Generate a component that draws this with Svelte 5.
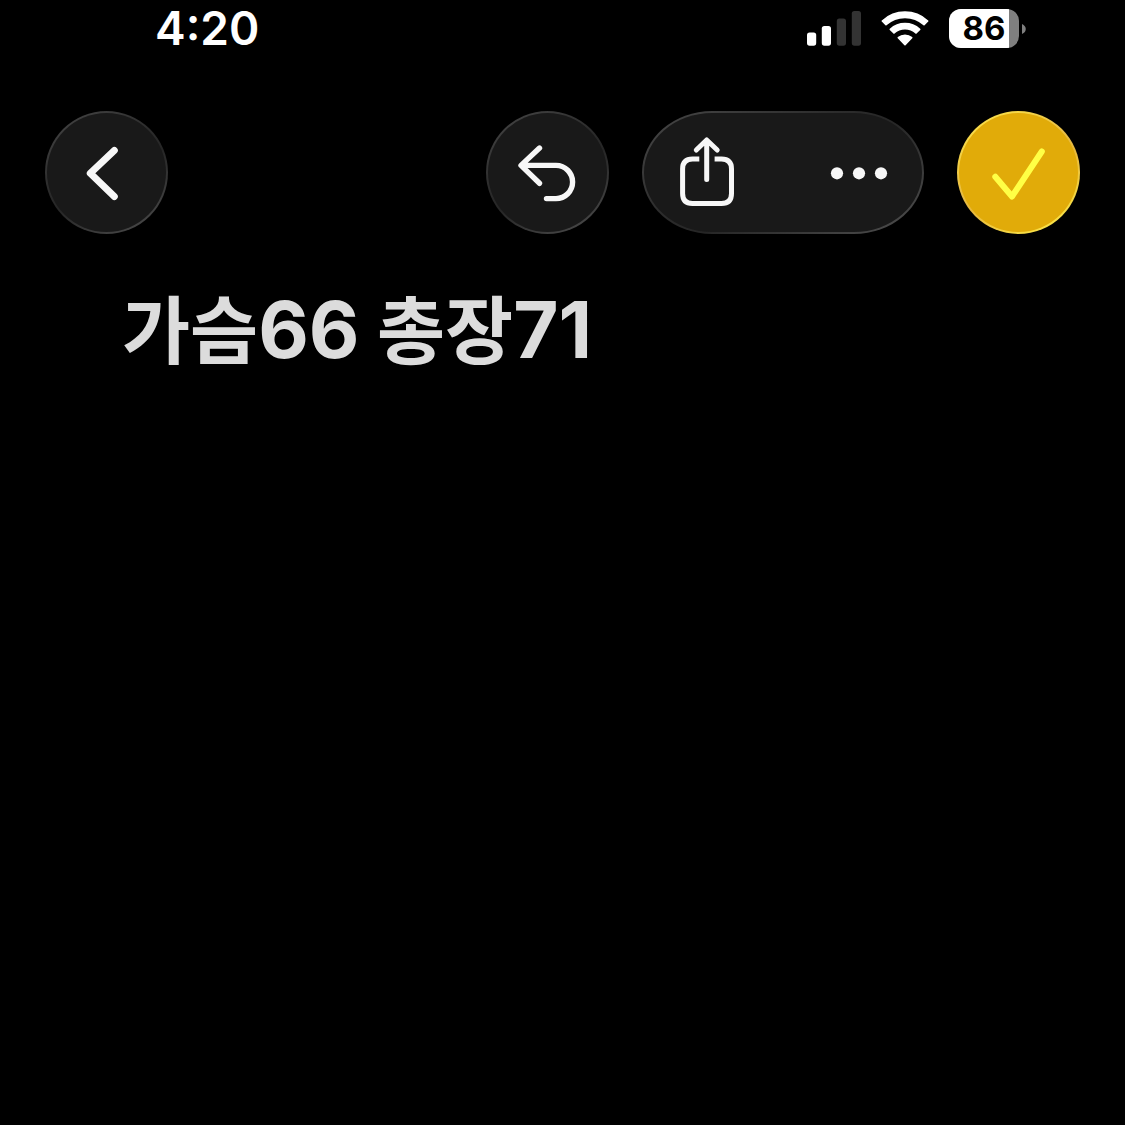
<script>
  let battery = $state(86);
</script>

<main class="screen">
  <header class="status">
    <time class="clock">4:20</time>
    <div class="indicators">
      <svg class="signal" viewBox="0 0 54 35" role="img" aria-label="Signal, 2 of 4 bars">
        <rect x="0" y="21.5" width="9.2" height="13.2" rx="2.6" />
        <rect x="14.8" y="15" width="9.2" height="19.7" rx="2.6" />
        <rect class="off" x="29.8" y="7.5" width="9.2" height="27.2" rx="2.6" />
        <rect class="off" x="44.8" y="0" width="9.2" height="34.7" rx="2.6" />
      </svg>
      <svg class="wifi" viewBox="0 0 142 105" role="img" aria-label="Wi-Fi">
        <path d="M3 30A100 100 0 0 1 139 30L128 41A85 85 0 0 0 14 41Z" />
        <path d="M27 55A65 65 0 0 1 115 55L104 66A49 49 0 0 0 38 66Z" />
        <path d="M51 80A31 31 0 0 1 91 80L71 101Z" />
      </svg>
      <div class="battery">
        <div class="cell">
          <div class="charge" style:width="{battery}%"></div>
          <span class="level">{battery}</span>
        </div>
        <svg class="terminal" viewBox="0 0 4 10" aria-hidden="true">
          <path d="M0 0C5 2 5 8 0 10Z" />
        </svg>
      </div>
    </div>
  </header>

  <nav class="toolbar" aria-label="Note">
    <button class="glass round back" aria-label="Back">
      <svg viewBox="0 0 123 123" stroke-width="7">
        <path d="M69.3 39.5L45.3 62.3L69.3 85.5" />
      </svg>
    </button>
    <button class="glass round" aria-label="Undo">
      <svg viewBox="0 0 123 123" stroke-width="5.4">
        <path d="M53.5 37L35 54.4L53.5 72.3M36 54.4H70A16.6 16.6 0 0 1 70 87.6H60.5" />
      </svg>
    </button>
    <div class="glass group">
      <button aria-label="Share">
        <svg viewBox="0 0 141 123" stroke-width="5">
          <path d="M64.7 29.5V68.5M54.3 39L64.7 29L75.2 39" />
          <path class="butt" d="M57.3 48H50.5Q40.6 48 40.6 58V82.5Q40.6 92.5 50.5 92.5H79.5Q89.5 92.5 89.5 82.5V58Q89.5 48 79.5 48H72.6" />
        </svg>
      </button>
      <button aria-label="More">
        <svg class="dots" viewBox="0 0 141 123">
          <circle cx="56" cy="62.3" r="6.1" />
          <circle cx="78" cy="62.3" r="6.1" />
          <circle cx="100" cy="62.3" r="6.1" />
        </svg>
      </button>
    </div>
    <button class="glass round done" aria-label="Done">
      <svg viewBox="0 0 123 123" stroke-width="6">
        <path d="M38.3 65.8L55 85.5L84.8 40.5" />
      </svg>
    </button>
  </nav>

  <article class="note">
    <h1 lang="ko">가슴<span class="num">66</span> 총장<span class="num">71</span></h1>
  </article>
</main>

<style>
  :global(body) {
    margin: 0;
    background: #000;
  }

  .screen {
    min-height: 100vh;
    background: #000;
    color: #fff;
    font-family: Inter, "Noto Sans CJK KR", sans-serif;
  }

  .status {
    display: flex;
    align-items: center;
    justify-content: space-between;
    height: 57px;
    padding: 0 99px 0 155px;
  }

  .clock {
    font-size: 46px;
    font-weight: 600;
    line-height: 57px;
  }

  .indicators {
    display: flex;
    align-items: center;
    gap: 20px;
  }

  .signal {
    width: 54px;
    height: 35px;
    fill: #fff;
  }

  .signal .off {
    fill: #333;
  }

  .wifi {
    width: 48px;
    height: 35px;
    fill: #fff;
    stroke: #fff;
    stroke-width: 5;
    stroke-linejoin: round;
  }

  .battery {
    display: flex;
    align-items: center;
    gap: 3px;
  }

  .cell {
    display: grid;
    width: 70px;
    height: 39px;
    border-radius: 12px;
    background: #7f7f7f;
    overflow: hidden;
  }

  .charge,
  .level {
    grid-area: 1 / 1;
  }

  .charge {
    background: #fff;
  }

  .level {
    color: #000;
    font-size: 33px;
    font-weight: 700;
    line-height: 39px;
    text-align: center;
  }

  .terminal {
    width: 4px;
    height: 10px;
    fill: #7f7f7f;
  }

  .toolbar {
    display: flex;
    gap: 33px;
    padding: 54px 45px 0;
  }

  .back {
    margin-right: auto;
  }

  button {
    display: block;
    padding: 0;
    border: 0;
    background: none;
    color: #f7f7f7;
    cursor: pointer;
  }

  button svg {
    display: block;
    height: 123px;
    fill: none;
    stroke: currentColor;
    stroke-linecap: round;
    stroke-linejoin: round;
  }

  .butt {
    stroke-linecap: butt;
  }

  .dots {
    fill: currentColor;
    stroke: none;
  }

  .glass {
    background:
      linear-gradient(#191919, #191919) padding-box,
      linear-gradient(150deg, #484848, #2c2c2c 40%, #262626 55%, #505050) border-box;
    border: 2px solid transparent;
    box-sizing: border-box;
    height: 123px;
  }

  .glass svg {
    margin: -2px;
  }

  .round {
    width: 123px;
    border-radius: 50%;
  }

  .group {
    display: flex;
    width: 282px;
    border-radius: 70px / 50%;
  }

  .group button {
    flex: 1;
  }

  .group svg {
    width: 141px;
  }

  .done {
    color: #ffff45;
    background:
      linear-gradient(#e1ab09, #e1ab09) padding-box,
      linear-gradient(150deg, #ffe84a, #e8bd45 45%, #e8b83c 55%, #fff04a) border-box;
  }

  .note {
    padding: 42px 122px;
  }

  h1 {
    margin: 0;
    color: #dcdcdc;
    font-size: 74px;
    font-weight: 700;
    line-height: 108px;
  }

  .num {
    font-size: 78px;
  }
</style>
